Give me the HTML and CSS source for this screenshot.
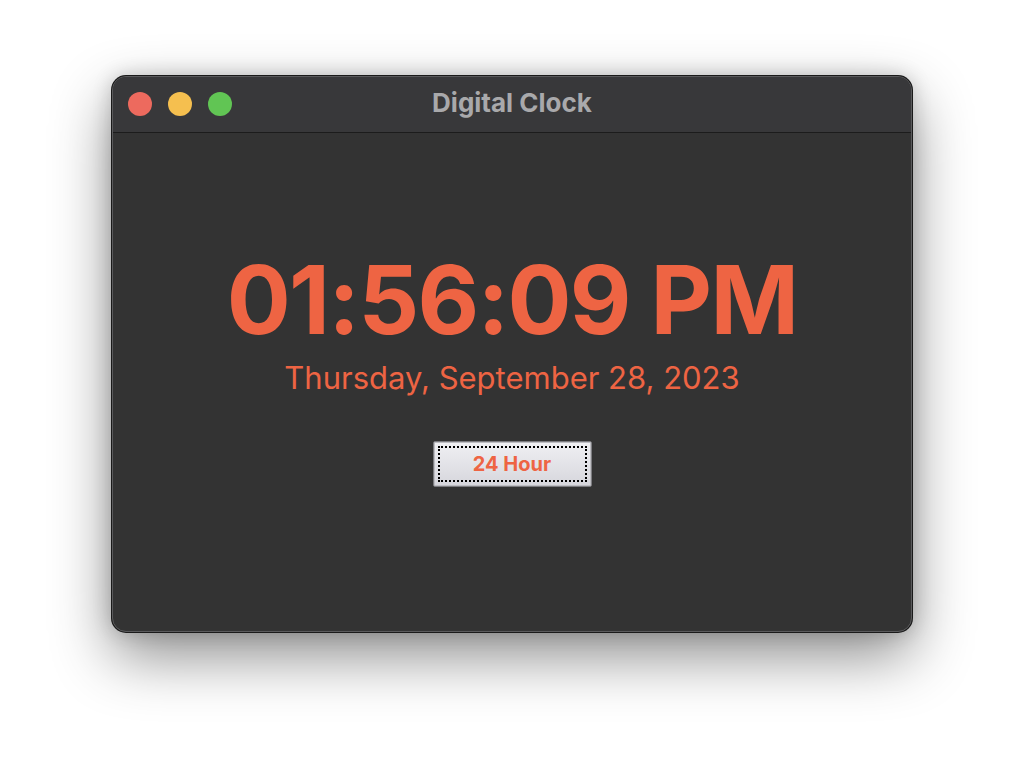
FILE: index.html
```html
<!DOCTYPE html>
<html>
<head>
<meta charset="utf-8">
<link rel="stylesheet" href="styles.css">
</head>
<body>
<div class="stage">
  <div class="window">
    <div class="titlebar">
      <div class="lights">
        <span class="light red"></span>
        <span class="light yellow"></span>
        <span class="light green"></span>
      </div>
      <div class="title">Digital Clock</div>
    </div>
    <div class="content">
      <div class="time">01:56:09 PM</div>
      <div class="date">Thursday, September 28, 2023</div>
      <button class="btn"><span class="focus">24 Hour</span></button>
    </div>
  </div>
</div>
</body>
</html>
```
FILE: styles.css
```css
html, body {
  margin: 0;
  padding: 0;
  background: #ffffff;
  width: 1024px;
  height: 780px;
  overflow: hidden;
  font-family: Inter, "Liberation Sans", sans-serif;
}
.stage {
  padding-top: 76px;
  padding-left: 112px;
}
.window {
  width: 800px;
  height: 556px;
  box-sizing: border-box;
  background: #333333;
  border-radius: 14px;
  border: 1px solid #5a5a5c;
  box-shadow: 0 0 0 1px #1a1a1a, 0 24px 60px rgba(0,0,0,0.45), 0 0 20px rgba(0,0,0,0.2);
  overflow: hidden;
  display: flex;
  flex-direction: column;
}
.titlebar {
  height: 55px;
  background: #38383a;
  border-bottom: 1px solid #1c1c1c;
  position: relative;
  display: flex;
  align-items: center;
  justify-content: center;
  flex-shrink: 0;
}
.lights {
  position: absolute;
  left: 15px;
  top: 15px;
  display: flex;
  gap: 16px;
}
.light {
  width: 24px;
  height: 24px;
  border-radius: 50%;
  display: block;
}
.red { background: #ed6a5e; }
.yellow { background: #f5bf4f; }
.green { background: #61c554; }
.title {
  color: #a9a9ab;
  font-weight: 700;
  font-size: 26px;
  letter-spacing: 0;
  margin-top: -4px;
}
.content {
  flex: 1;
  display: flex;
  flex-direction: column;
  align-items: center;
  padding-top: 111px;
}
.time {
  color: #ee6443;
  font-weight: 700;
  font-size: 95px;
  line-height: 112px;
  letter-spacing: -1.7px;
}
.date {
  color: #ee6443;
  font-size: 31px;
  line-height: 40px;
  margin-top: 2px;
}
.btn {
  margin-top: 43px;
  width: 159px;
  height: 46px;
  padding: 4px;
  border: 1px solid #7c7c80;
  border-radius: 2px;
  background: linear-gradient(#f0f0f3, #d6d6dc);
  box-shadow: inset 0 0 0 1px #bdbdc2;
  font-family: Inter, "Liberation Sans", sans-serif;
  font-weight: 700;
  font-size: 20px;
  color: #ee6443;
  display: flex;
}
.focus {
  flex: 1;
  border: 2px dotted #000000;
  display: flex;
  align-items: center;
  justify-content: center;
}
```
